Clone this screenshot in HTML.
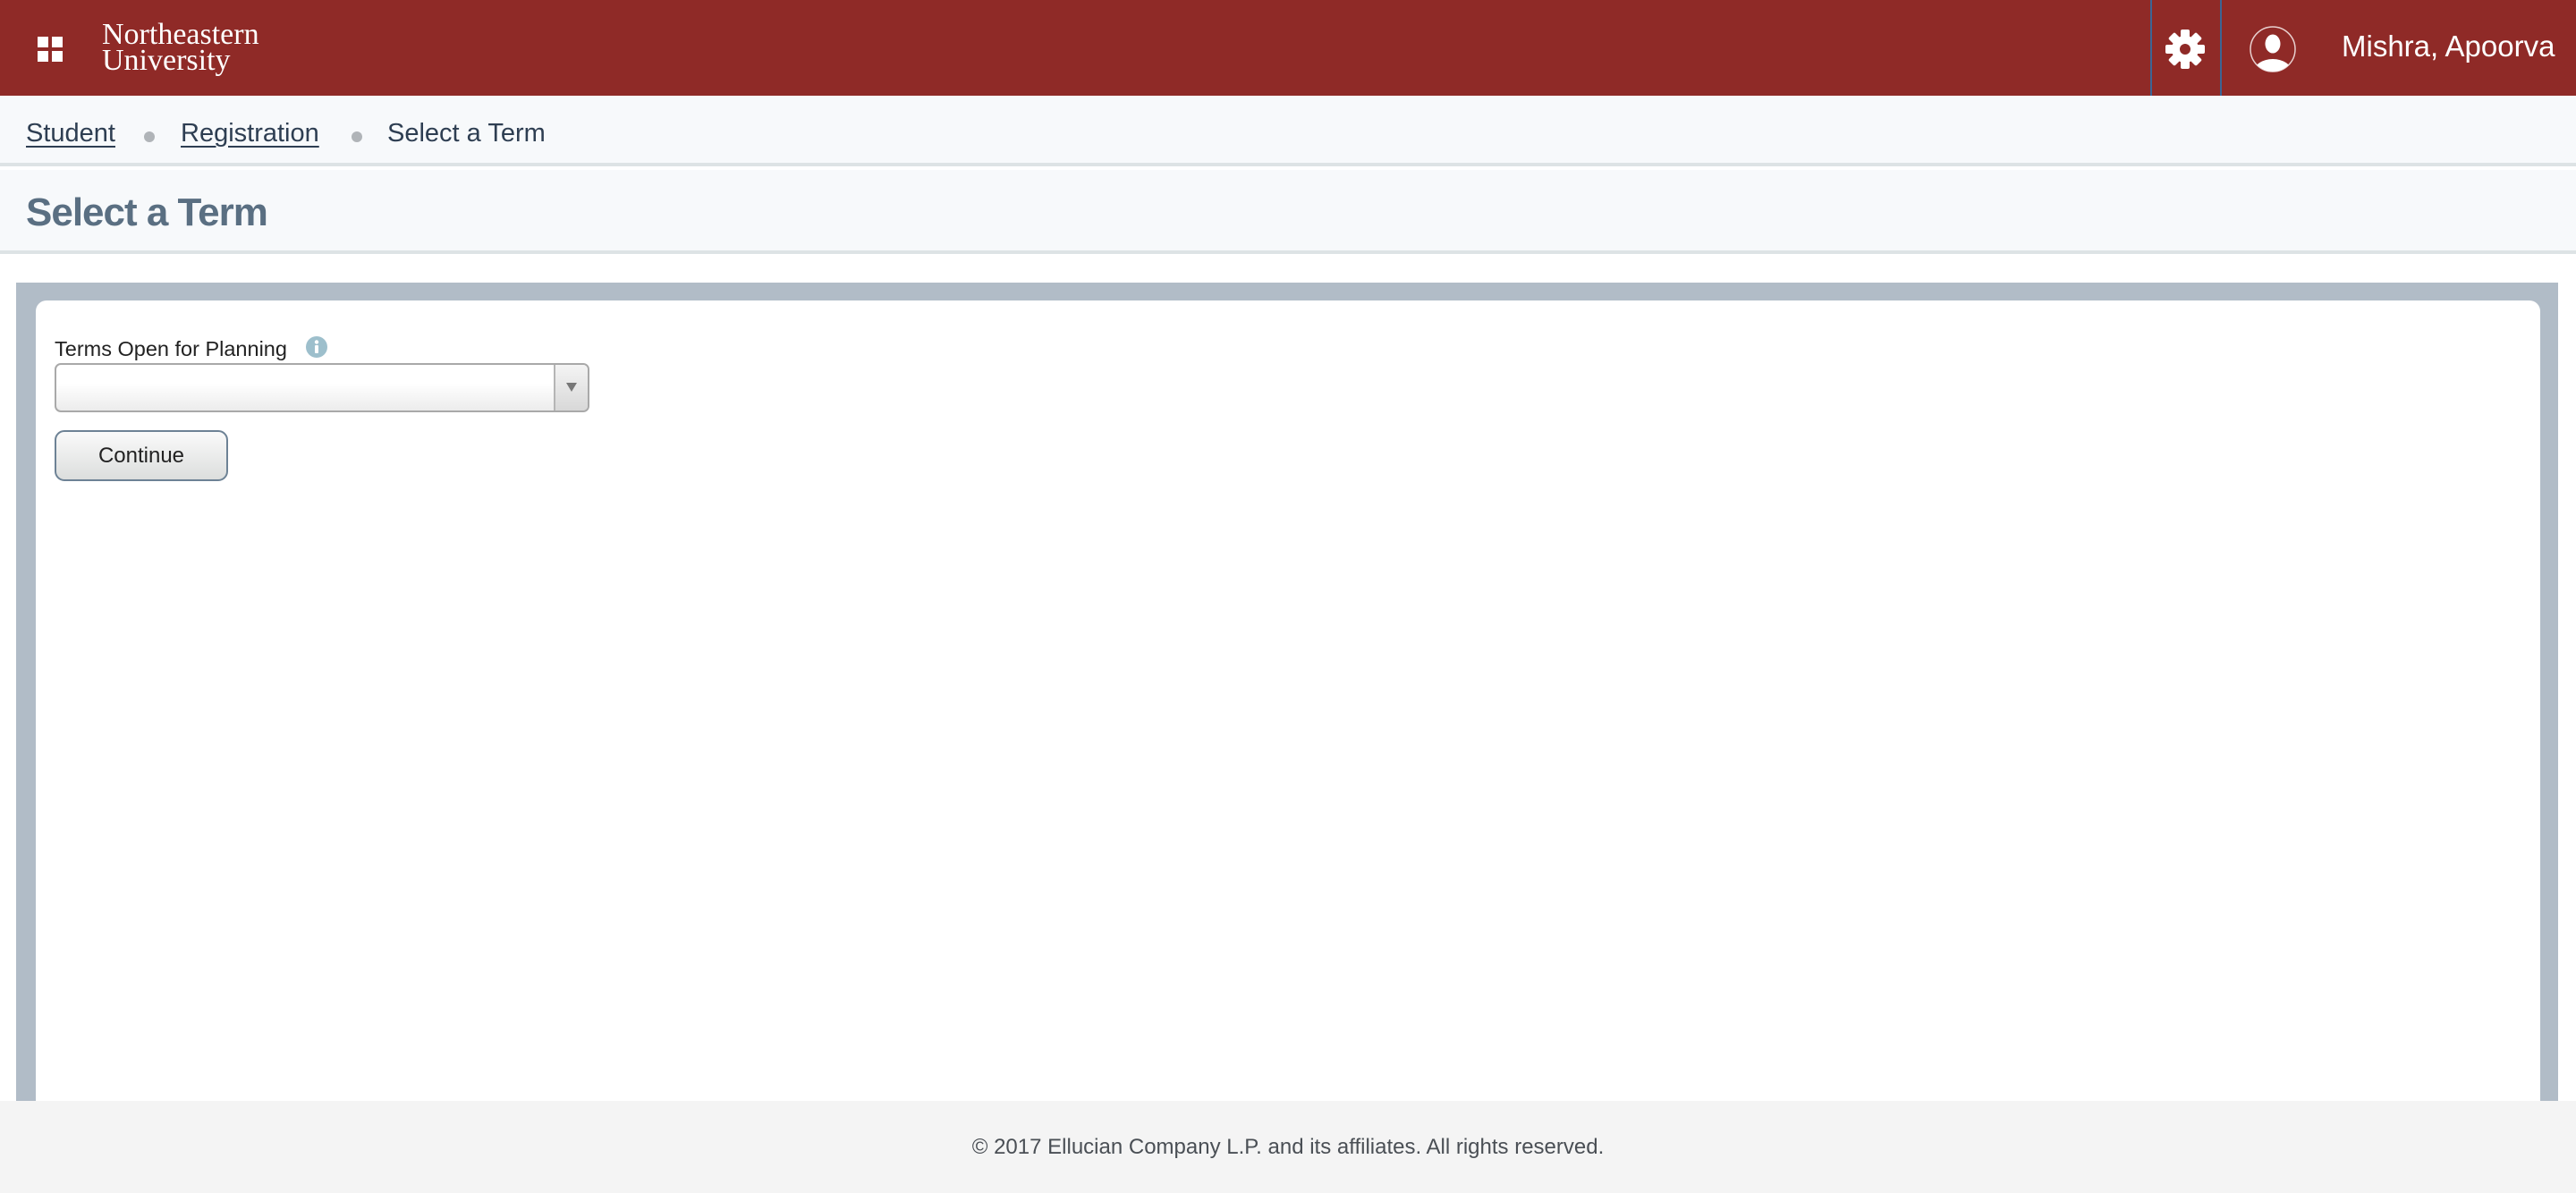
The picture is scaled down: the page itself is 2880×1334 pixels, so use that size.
<!DOCTYPE html>
<html><head><meta charset="utf-8"><style>
*{margin:0;padding:0;box-sizing:border-box}
body{width:2880px;height:1334px;position:relative;overflow:hidden;background:#fff;font-family:"Liberation Sans",Arial,sans-serif}
.abs{position:absolute}
#hdr{left:0;top:0;width:2880px;height:107px;background:#8f2a27}
.sq{position:absolute;width:12px;height:12px;background:#fff}
.logo{font-family:"Liberation Serif",serif;color:#fff;font-size:34px;letter-spacing:0px;line-height:29px}
#bc{left:0;top:107px;width:2880px;height:79px;background:#f7f9fb;border-bottom:4px solid #dde3e5}
.bct{position:absolute;top:22px;font-size:29px;color:#2e3e52;line-height:40px}
.bct.u{text-decoration:underline;text-decoration-thickness:2px;text-underline-offset:5px}
.dot{position:absolute;top:40px;width:12px;height:12px;border-radius:50%;background:#b0b4b8}
#ttl{left:0;top:190px;width:2880px;height:94px;background:#f7f9fb;border-bottom:4px solid #dde3e5}
#frame{left:18px;top:316px;width:2842px;height:940px;background:#b1bcc7}
#card{left:40px;top:336px;width:2800px;height:920px;background:#fff;border-radius:12px 12px 0 0}
#foot{left:0;top:1231px;width:2880px;height:103px;background:#f4f4f4;text-align:center;font-size:24px;color:#4a4f55;line-height:103px}
</style></head><body>
<div id="hdr" class="abs">
  <div class="sq" style="left:42px;top:41px"></div><div class="sq" style="left:58px;top:41px"></div>
  <div class="sq" style="left:42px;top:57px"></div><div class="sq" style="left:58px;top:57px"></div>
  <div class="abs logo" style="left:114px;top:24px">Northeastern<br>University</div>
  <div class="abs" style="left:2404px;top:0;width:2px;height:107px;background:#3c6595"></div>
  <div class="abs" style="left:2482px;top:0;width:2px;height:107px;background:#3c6595"></div>
  <svg class="abs" style="left:2420px;top:32px" width="46" height="46" viewBox="-23 -23 46 46">
    <g fill="#fff">
      <circle r="15"/>
      <rect x="-5" y="-22" width="10" height="12" rx="2"/>
      <rect x="-5" y="-22" width="10" height="12" rx="2" transform="rotate(45)"/>
      <rect x="-5" y="-22" width="10" height="12" rx="2" transform="rotate(90)"/>
      <rect x="-5" y="-22" width="10" height="12" rx="2" transform="rotate(135)"/>
      <rect x="-5" y="-22" width="10" height="12" rx="2" transform="rotate(180)"/>
      <rect x="-5" y="-22" width="10" height="12" rx="2" transform="rotate(225)"/>
      <rect x="-5" y="-22" width="10" height="12" rx="2" transform="rotate(270)"/>
      <rect x="-5" y="-22" width="10" height="12" rx="2" transform="rotate(315)"/>
    </g>
    <circle r="6" fill="#8f2a27"/>
  </svg>
  <svg class="abs" style="left:2514px;top:28px" width="54" height="54" viewBox="0 0 54 54">
    <defs><clipPath id="c"><circle cx="27" cy="27" r="25"/></clipPath></defs>
    <circle cx="27" cy="27" r="25" fill="none" stroke="#e8d0cf" stroke-width="1.5"/>
    <g clip-path="url(#c)" fill="#fff">
      <ellipse cx="27" cy="21" rx="8.5" ry="10.5"/>
      <ellipse cx="27" cy="52" rx="21" ry="14"/>
    </g>
  </svg>
  <div class="abs" style="left:2618px;top:32px;font-size:33px;color:#fff;line-height:40px">Mishra, Apoorva</div>
</div>
<div id="bc" class="abs">
  <div class="bct u" style="left:29px">Student</div>
  <div class="dot" style="left:161px"></div>
  <div class="bct u" style="left:202px">Registration</div>
  <div class="dot" style="left:393px"></div>
  <div class="bct" style="left:433px">Select a Term</div>
</div>
<div id="ttl" class="abs">
  <div class="abs" style="left:29px;top:22px;font-size:44px;font-weight:bold;letter-spacing:-1px;color:#5a6f82;line-height:52px">Select a Term</div>
</div>
<div id="frame" class="abs"></div>
<div id="card" class="abs">
  <div class="abs" style="left:21px;top:39px;font-size:23.5px;color:#222;line-height:30px">Terms Open for Planning</div>
  <svg class="abs" style="left:302px;top:40px" width="24" height="24" viewBox="0 0 24 24">
    <circle cx="12" cy="12" r="12" fill="#9dbfcc"/>
    <circle cx="12" cy="6.5" r="2.2" fill="#fff"/>
    <rect x="10" y="10" width="4" height="9" rx="1" fill="#fff"/>
  </svg>
  <div class="abs" style="left:21px;top:70px;width:598px;height:55px;border:2px solid #a9a9a9;border-radius:7px;background:linear-gradient(#fff 40%,#ececec);overflow:hidden">
    <div class="abs" style="right:0;top:0;width:38px;height:51px;border-left:2px solid #b5b5b5;background:linear-gradient(#f4f4f4,#d8d8d8)">
      <svg class="abs" style="left:12px;top:20px" width="12" height="10" viewBox="0 0 12 10"><path d="M0 0H12L6 10Z" fill="#777"/></svg>
    </div>
  </div>
  <div class="abs" style="left:21px;top:145px;width:194px;height:57px;border:2px solid #6d8295;border-radius:11px;background:linear-gradient(#fafafa,#dcdedd);text-align:center;font-size:24px;line-height:53px;color:#222">Continue</div>
</div>
<div id="foot" class="abs">© 2017 Ellucian Company L.P. and its affiliates. All rights reserved.</div>
</body></html>
